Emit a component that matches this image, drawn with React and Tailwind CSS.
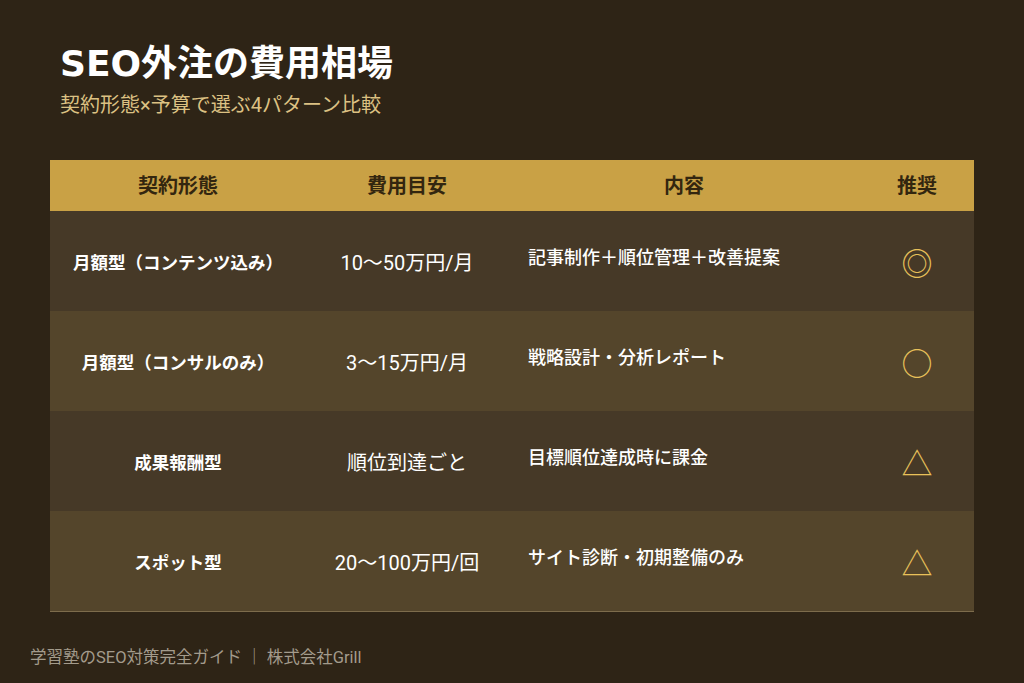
export default function App() {
  const rows = [
    { type: "月額型（コンテンツ込み）", cost: "10〜50万円/月", body: "記事制作＋順位管理＋改善提案", mark: "◎", bg: "bg-[#463927]" },
    { type: "月額型（コンサルのみ）", cost: "3〜15万円/月", body: "戦略設計・分析レポート", mark: "○", bg: "bg-[#54452b]" },
    { type: "成果報酬型", cost: "順位到達ごと", body: "目標順位達成時に課金", mark: "△", bg: "bg-[#463927]" },
    { type: "スポット型", cost: "20〜100万円/回", body: "サイト診断・初期整備のみ", mark: "△", bg: "bg-[#54452b]" },
  ];
  return (
    <div
      className="w-[1024px] h-[683px] bg-[#2e2416] flex flex-col overflow-hidden"
      style={{ fontFamily: 'Roboto, "Noto Sans CJK JP", sans-serif' }}
    >
      <div className="pl-[60px] pt-[41px]">
        <h1
          className="text-[36px] leading-[46px] font-bold text-white"
          style={{ fontFamily: '"DejaVu Sans", "Noto Sans CJK JP", sans-serif' }}
        >
          SEO外注の費用相場
        </h1>
        <p className="text-[20px] leading-[28px] text-[#dcc183] mt-[4px]">契約形態×予算で選ぶ4パターン比較</p>
      </div>
      <div className="mx-[50px] mt-[41px] border-b border-[#7d6c4c]">
        <div className="flex h-[51px] bg-[#c9a145] text-[#33260f] text-[20px] font-bold items-center">
          <div className="w-[256px] text-center">契約形態</div>
          <div className="w-[202px] text-center">費用目安</div>
          <div className="w-[352px] text-center">内容</div>
          <div className="flex-1 text-center">推奨</div>
        </div>
        {rows.map((r, i) => (
          <div key={i} className={`flex h-[100px] items-center pt-[4px] ${r.bg}`}>
            <div className="w-[256px] text-center text-white font-bold text-[17.5px]">{r.type}</div>
            <div className="w-[202px] text-center text-white text-[20px]">{r.cost}</div>
            <div className="w-[352px] pl-[20px] pb-[12px] text-white text-[18px] font-medium">{r.body}</div>
            <div className="flex-1 text-center text-[#e8c15a] text-[31px] leading-none pt-[2px]">{r.mark}</div>
          </div>
        ))}
      </div>
      <div className="pl-[30px] mt-[34px] text-[16.5px] text-[#a39b8c]">学習塾のSEO対策完全ガイド ｜ 株式会社Grill</div>
    </div>
  );
}
